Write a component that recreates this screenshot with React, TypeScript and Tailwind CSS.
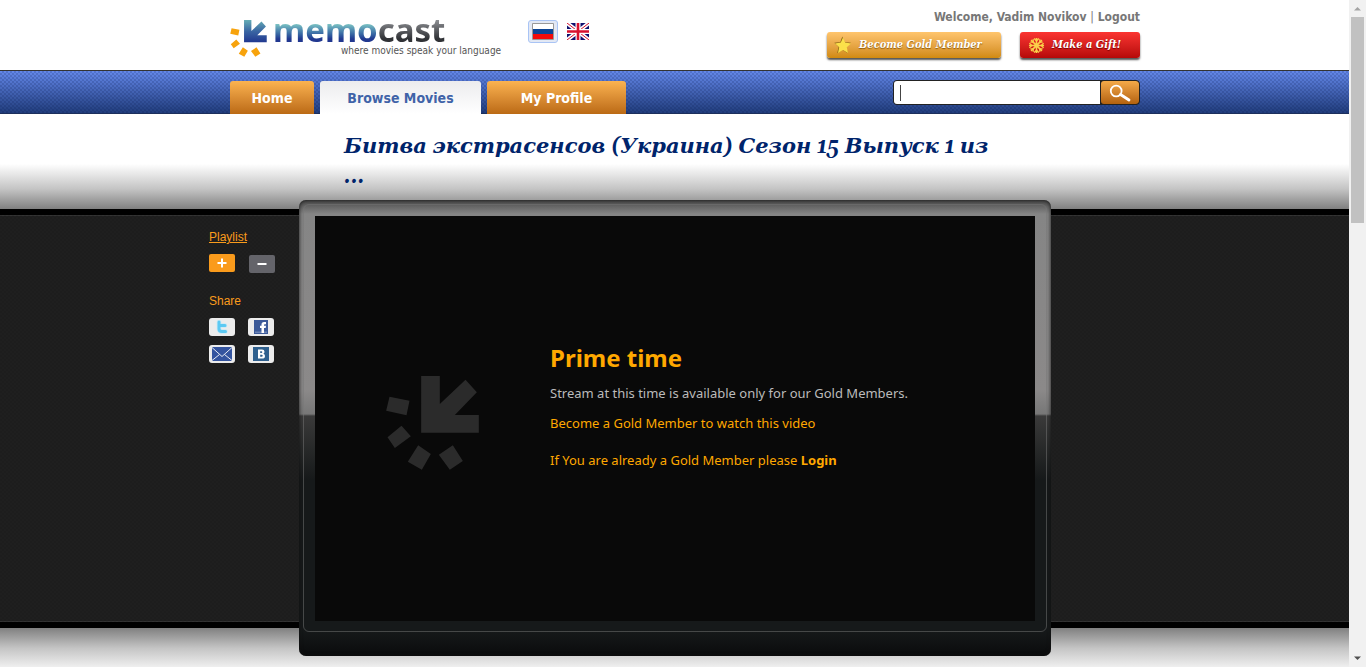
import type { ReactNode } from "react";

const UI = "font-['DejaVu_Sans_Condensed','Noto_Sans',sans-serif]";

function Sunburst({ className, squares, arrow }: { className: string; squares: string; arrow: string }) {
  return (
    <svg viewBox="46 138 278 282" className={className} aria-hidden="true">
      <defs>
        <linearGradient id="logoBlue" x1="0" y1="0" x2="0" y2="1">
          <stop offset="0" stopColor="#65adb5" />
          <stop offset="0.5" stopColor="#3a66a3" />
          <stop offset="1" stopColor="#213890" />
        </linearGradient>
      </defs>
      <path fill={arrow} d="M151 138H207V222L284 149L318 187L252 255H324V308H151Z" />
      <path
        fill={squares}
        d="M56 200L116 212L107 256L46 242ZM92 287L120 319L72 354L50 322ZM142 346L180 372L153 419L111 395ZM246 346L276 393L237 419L204 374Z"
      />
    </svg>
  );
}

function Header() {
  return (
    <header className="border-b border-[#333] bg-white">
      <div className="mx-auto flex h-[70px] w-[931px] justify-between pl-[21px]">
        <div className="flex">
          <a href="#" className="flex w-[298px] pt-5 no-underline" aria-label="memocast">
            <Sunburst className="h-[37px] w-[37px] shrink-0" squares="#f7a30d" arrow="url(#logoBlue)" />
            <span className="flex flex-col pl-[6px]">
              <span className="-mt-[5px] flex font-['Noto_Sans',sans-serif] text-[33px] font-bold leading-[30px]">
                <span className="bg-linear-to-b from-[#7cc3c3] from-30% to-[#213890] to-80% bg-clip-text text-transparent">memo</span>
                <span className="bg-linear-to-b from-[#8a8c90] from-20% to-[#303236] to-80% bg-clip-text text-transparent">cast</span>
              </span>
              <span className={`${UI} pl-[68px] text-[10px] leading-[12px] whitespace-nowrap text-[#555]`}>
                where movies speak your language
              </span>
            </span>
          </a>
          <div className="flex items-start gap-2 pt-5">
            <button type="button" aria-label="Русский" className="flex h-[23px] w-[30px] items-center justify-center rounded-[3px] border border-[#a9c4f5] bg-[#e2e8f4]">
              <svg viewBox="0 0 22 17" className="h-[17px] w-[22px]">
                <rect width="22" height="17" rx="1" fill="#999" />
                <rect x="1" y="1" width="20" height="5" fill="#fff" />
                <rect x="1" y="6" width="20" height="5" fill="#0b4596" />
                <rect x="1" y="11" width="20" height="5" fill="#f20b0b" />
              </svg>
            </button>
            <button type="button" aria-label="English" className="flex h-[23px] w-[24px] items-center justify-center">
              <svg viewBox="0 0 22 17" className="h-[17px] w-[22px]">
                <rect width="22" height="17" fill="#10106e" />
                <path d="M0 0L22 17M22 0L0 17" stroke="#fff" strokeWidth="4" />
                <path d="M0 0L22 17M22 0L0 17" stroke="#d8102e" strokeWidth="1" />
                <path d="M11 0V17M0 8.5H22" stroke="#fff" strokeWidth="5" />
                <path d="M11 0V17M0 8.5H22" stroke="#d8102e" strokeWidth="2.6" />
              </svg>
            </button>
          </div>
        </div>
        <div className="flex flex-col items-end">
          <p className={`${UI} pt-[9px] text-[12px] font-bold leading-4 text-[#777]`}>
            Welcome, Vadim Novikov <span className="font-normal">|</span> <a href="#">Logout</a>
          </p>
          <div className="mt-[7px] flex gap-[19px] font-['DejaVu_Serif_Condensed','DejaVu_Serif',serif] text-[11px] font-bold italic text-white">
            <a href="#" className="flex h-[26px] w-[174px] items-center rounded-[3px] bg-linear-to-b from-[#ffc56d] to-[#d18a0c] pl-[7px] shadow-[0_2px_2px_#555] [text-shadow:0_1px_1px_#8a5a10]">
              <svg viewBox="0 0 18 18" className="mr-[7px] h-[18px] w-[18px]">
                <path d="M8.3 .5L10.6 6L17 6.8L12.3 11L13.8 17.2L8.6 14L3.2 17.2L4.6 11L.3 6.8L6.3 6Z" fill="#8a6414" />
                <path d="M9 1.5L11.2 6.6L17 7.4L12.8 11.2L14 17L9 14L4 17L5.2 11.2L1 7.4L6.8 6.6Z" fill="#fbe04a" />
              </svg>
              Become Gold Member
            </a>
            <a href="#" className="flex h-[26px] w-[120px] items-center rounded-[3px] bg-linear-to-b from-[#fb3431] to-[#b60808] pl-2 shadow-[0_2px_2px_#555] [text-shadow:0_1px_1px_#700]">
              <svg viewBox="0 0 18 18" className="mr-[7px] h-[17px] w-[17px]" fill="none" stroke="#fbd04a" strokeWidth="1.7">
                <path d="M9 1V17M1 9H17M3.3 3.3L14.7 14.7M14.7 3.3L3.3 14.7" />
                <path strokeWidth="1.4" d="M6.500 1.500L9 4L11.500 1.500M6.500 16.500L9 14L11.500 16.500M1.500 6.500L4 9L1.500 11.500M16.500 6.500L14 9L16.500 11.500M2.500 5.500H5.500V2.500M15.500 5.500H12.500V2.500M2.500 12.500H5.500V15.500M15.500 12.500H12.500V15.500" />
              </svg>
              Make a Gift!
            </a>
          </div>
        </div>
      </div>
    </header>
  );
}

const tabBase = "flex h-[33px] items-center justify-center rounded-t-[3px] pt-[2px] text-[14px] font-bold";

function Nav() {
  return (
    <nav className="bg-[linear-gradient(to_bottom,#6488ea,#1f3b79)]">
      <div className="bg-[repeating-conic-gradient(rgba(10,25,80,0.18)_0_25%,transparent_0_50%)] bg-size-[4px_4px] shadow-[inset_0_-1px_0_#1c2f5c]">
        <div className={`${UI} mx-auto flex h-[43px] w-[931px] items-start justify-between pl-[21px]`}>
          <div className="flex gap-[6px] pt-[10px]">
            <a href="#" className={`${tabBase} w-[84px] bg-linear-to-b from-[#fbb350] to-[#bb6a14] text-white`}>Home</a>
            <a href="#" className={`${tabBase} w-[161px] bg-linear-to-b from-[#ececee] to-white text-[#3f63a8]`}>Browse Movies</a>
            <a href="#" className={`${tabBase} w-[139px] bg-linear-to-b from-[#fbb350] to-[#bb6a14] text-white`}>My Profile</a>
          </div>
          <form className="mt-[9px] flex h-[25px] w-[247px] overflow-hidden rounded-[4px] border border-[#222] bg-[#222]" onSubmit={(e) => e.preventDefault()}>
            <div className="flex min-w-0 flex-1 items-center bg-white pl-[6px]">
              <span className="h-4 w-px bg-[#444]" />
              <input type="text" aria-label="Search movies" className="h-full min-w-0 flex-1 bg-white px-1 text-[13px] outline-none" />
            </div>
            <button type="submit" aria-label="Search" className="ml-px flex w-[38px] items-center justify-center rounded-[3px] bg-linear-to-b from-[#f5aa48] to-[#b3620e]">
              <svg viewBox="0 0 22 18" className="h-[18px] w-[22px]" fill="none" stroke="#fff" strokeLinecap="round">
                <circle cx="7.2" cy="7" r="5.4" strokeWidth="1.8" />
                <path d="M11.5 10.5L20 16" strokeWidth="2.8" />
              </svg>
            </button>
          </form>
        </div>
      </div>
    </nav>
  );
}

function ShareButton({ label, children }: { label: string; children: ReactNode }) {
  return (
    <button type="button" aria-label={label} className="flex h-[18px] w-[26px] items-center justify-center rounded-[3px] bg-[#ececec]">
      {children}
    </button>
  );
}

function Sidebar() {
  return (
    <aside className="w-[90px] pt-5 font-['Liberation_Sans',Arial,sans-serif] text-[12px] leading-4 text-[#fa9b1c]">
      <a href="#" className="underline">Playlist</a>
      <div className="mt-[9px] flex items-start gap-[14px]">
        <button type="button" aria-label="Add to playlist" className="flex h-[18px] w-[26px] items-center justify-center rounded-[2px] bg-[#fa9b1c]">
          <svg viewBox="0 0 10 10" className="h-[10px] w-[10px]" stroke="#fff" strokeWidth="2"><path d="M5 .5V9.5M.5 5H9.5" /></svg>
        </button>
        <button type="button" aria-label="Remove from playlist" className="mt-px flex h-[18px] w-[26px] items-center justify-center rounded-[2px] bg-[#64646a]">
          <svg viewBox="0 0 10 10" className="h-[10px] w-[10px]" stroke="#fff" strokeWidth="2"><path d="M.5 5H9.5" /></svg>
        </button>
      </div>
      <p className="mt-5">Share</p>
      <div className="mt-[9px] grid w-[65px] grid-cols-[26px_26px] gap-x-[13px] gap-y-[9px]">
        <ShareButton label="Twitter">
          <svg viewBox="0 0 14 14" className="h-[14px] w-[14px]" fill="none" strokeLinecap="round" strokeLinejoin="round">
            <path d="M4 2V9Q4 11.5 7 11.5H10.5M4 5.5H10" stroke="#c9e9f5" strokeWidth="4.6" />
            <path d="M4 2V9Q4 11.5 7 11.5H10.5M4 5.5H10" stroke="#5cc9f3" strokeWidth="3" />
          </svg>
        </ShareButton>
        <ShareButton label="Facebook">
          <svg viewBox="0 0 14 14" className="h-[14px] w-[14px]">
            <rect width="14" height="14" fill="#3b5998" />
            <rect x="1" y="11.5" width="12" height="1.5" fill="#6d84b4" />
            <path d="M7.5 13V8H6V5.8H7.5V4.5Q7.500 2 10 2H12V4.200H10.800Q10 4.200 10 5V5.800H12L11.700 8H10V13Z" fill="#fff" />
          </svg>
        </ShareButton>
        <ShareButton label="E-mail">
          <svg viewBox="0 0 20 14" className="h-[14px] w-[20px]">
            <rect width="20" height="14" fill="#34549f" />
            <path d="M0 .5L10 9.500L20 .5M0 13.500L7.500 7.500M20 13.500L12.500 7.500" fill="none" stroke="#e6eaf3" />
          </svg>
        </ShareButton>
        <ShareButton label="VKontakte">
          <svg viewBox="0 0 16 14" className="h-[14px] w-[16px]">
            <rect width="16" height="14" fill="#2f608e" />
            <path fillRule="evenodd" d="M5 2.500H9Q11.500 2.500 11.500 4.800Q11.500 6.200 10.400 6.700Q12 7.300 12 8.900Q12 11.500 9 11.500H5ZM7.200 4.300V6H8.400Q9.300 6 9.300 5.100Q9.300 4.300 8.400 4.300ZM7.200 7.700V9.700H8.600Q9.700 9.700 9.700 8.700Q9.700 7.700 8.600 7.700Z" fill="#fff" />
          </svg>
        </ShareButton>
      </div>
    </aside>
  );
}

function Television() {
  return (
    <section className="relative -mt-[9px] -mb-7 w-[752px] rounded-[7px] bg-[linear-gradient(to_bottom,#4a4a4a,#858585_14px,#8b8989_190px,#777_214px,#3a3a3a_216px,#16191a_280px,#16191a_430px,#0a0b0c)] px-1 pt-1 pb-6 shadow-[inset_0_0_4px_#111]">
      <div className="rounded-[6px] border border-[#777]/50 px-[11px] pt-[11px] pb-[10px]">
        <div className="flex h-[405px] bg-[#090909] font-['Noto_Sans',sans-serif] text-[13px] leading-5 text-[#ffa800]">
          <div className="w-[235px] pt-[160px] pl-[71px]">
            <Sunburst className="h-[94px] w-[93px]" squares="#2b2b2b" arrow="#2b2b2b" />
          </div>
          <div className="pt-[127px]">
            <h2 className="text-[24px] font-bold leading-[30px]">Prime time</h2>
            <p className="mt-[10px] text-[#bbb]">Stream at this time is available only for our Gold Members.</p>
            <p className="mt-[10px]"><a href="#">Become a Gold Member to watch this video</a></p>
            <p className="mt-[17px]">If You are already a Gold Member please <a href="#" className="font-bold">Login</a></p>
          </div>
        </div>
      </div>
    </section>
  );
}

function Scrollbar() {
  return (
    <div className="flex w-[17px] shrink-0 flex-col items-center bg-[#f1f1f1]" aria-hidden="true">
      <svg viewBox="0 0 17 17" className="h-[17px] w-[17px]"><path d="M5 10.500L8.500 7L12 10.500Z" fill="#a3a3a3" /></svg>
      <div className="h-[206px] w-[13px] bg-[#c1c1c1]" />
      <svg viewBox="0 0 17 17" className="mt-auto h-[17px] w-[17px]"><path d="M5 6.500L8.500 10L12 6.500Z" fill="#505050" /></svg>
    </div>
  );
}

export default function App() {
  return (
    <div className="flex h-screen overflow-hidden bg-white">
      <div className="min-w-0 flex-1">
        <Header />
        <Nav />
        <div className="h-[95px] bg-[linear-gradient(to_bottom,#fff_50px,#c4c4c4_75px,#808080_95px)]">
          <div className="mx-auto w-[931px] pt-[18px] pl-[135px]">
            <h1 className="w-[660px] font-[Gelasio,'DejaVu_Serif',serif] text-[21px] font-bold italic leading-[30px] text-[#00246b]">
              Битва экстрасенсов (Украина) Сезон 15 Выпуск 1 из ...
            </h1>
          </div>
        </div>
        <main className="border-y-[6px] border-black bg-[#1f1f1f] shadow-[inset_0_1px_0_#333,inset_0_-1px_0_#333]">
          <div className="-my-[6px] bg-[repeating-conic-gradient(rgba(0,0,0,0.08)_0_25%,transparent_0_50%)] bg-size-[4px_4px]">
            <div className="mx-auto flex w-[931px]">
              <Sidebar />
              <Television />
            </div>
          </div>
        </main>
        <div className="h-[60px] bg-[linear-gradient(to_bottom,#808080,#c4c4c4_20px,#fff_46px)]" />
      </div>
      <Scrollbar />
    </div>
  );
}
